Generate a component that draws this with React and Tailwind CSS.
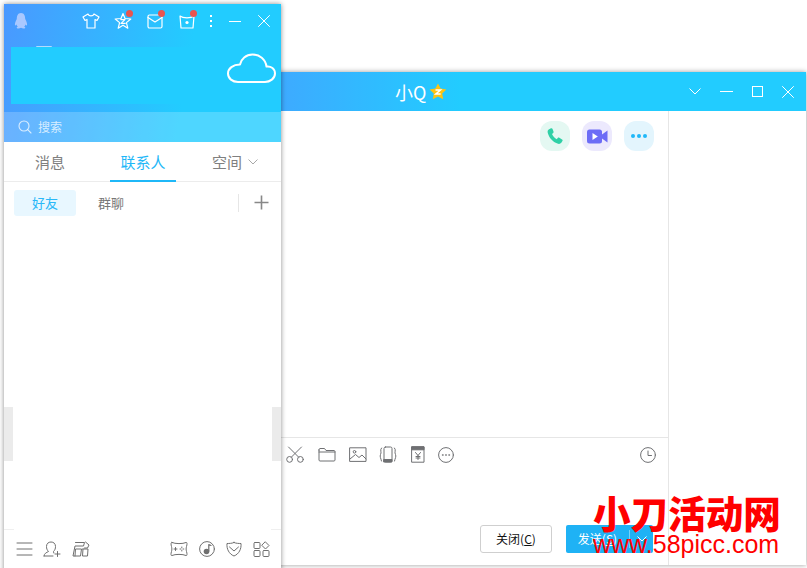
import React from 'react';

const line = { fill: 'none', stroke: 'currentColor', strokeWidth: 1.2, strokeLinecap: 'round', strokeLinejoin: 'round' };

const Icon = ({ w = 18, h = 18, children, className = '' }) => (
  <svg width={w} height={h} viewBox={`0 0 ${w} ${h}`} className={`shrink-0 ${className}`} {...line}>
    {children}
  </svg>
);

const Dot = () => <span className="absolute -top-[2px] -right-[1px] w-[7px] h-[7px] rounded-full bg-[#e8544f]" />;

const Close = ({ s = 12 }) => (
  <Icon w={s} h={s}>
    <path d={`M0.5 0.5L${s - 0.5} ${s - 0.5}M${s - 0.5} 0.5L0.5 ${s - 0.5}`} strokeWidth="1" />
  </Icon>
);

const ListWindow = () => (
  <div className="absolute left-[4px] top-[4px] z-10 w-[277px] h-[570px] flex flex-col bg-white shadow-[0_0_5px_rgba(0,0,0,0.45)]">
    {/* header */}
    <div className="bg-[linear-gradient(100deg,#4a98ff,#22ccff_65%)] text-white">
      <div className="flex h-[34px] mb-[9px] items-center pl-[10px]">
        <svg width="14" height="16" viewBox="0 0 14 16" className="shrink-0">
          <path d="M7 0C3.8 0 2.8 3 2.8 6C1.5 8.5 0.6 10.5 1 12.5C1.6 12.5 2 12 2.4 11.4C2.7 12.3 3.2 13 3.8 13.5C2.8 14 2.4 14.6 3 15.2C4 15.8 6 15.4 7 14.8C8 15.4 10 15.8 11 15.2C11.6 14.6 11.2 14 10.2 13.5C10.8 13 11.3 12.3 11.6 11.4C12 12 12.4 12.5 13 12.5C13.4 10.5 12.5 8.5 11.2 6C11.2 3 10.2 0 7 0Z" fill="#a9c8ff" />
        </svg>
        <div className="ml-[54px] flex items-center gap-[14px]">
          <Icon>
            <path d="M6 2L1 5L3 8.5L5 7.5V16H13V7.5L15 8.5L17 5L12 2C11 4.5 7 4.5 6 2Z" />
          </Icon>
          <span className="relative">
            <Icon>
              <path d="M9 1.5L11 6.5L16.8 7L12.4 10.6L13.8 16.2L9 13.2L4.2 16.2L5.6 10.6L1.2 7L7 6.5Z" />
              <path d="M6.8 7.6H11L7 11.4H11.2" />
            </Icon>
            <Dot />
          </span>
          <span className="relative">
            <Icon>
              <rect x="2" y="3" width="14" height="13" rx="1.5" />
              <path d="M2 5.5L9 10L16 5.5" />
            </Icon>
            <Dot />
          </span>
          <span className="relative">
            <Icon>
              <path d="M2 4C5 6.5 13 6.5 16 4L15 16H3Z" />
              <circle cx="9" cy="10.5" r="1.6" fill="currentColor" stroke="none" />
            </Icon>
            <Dot />
          </span>
        </div>
        <div className="ml-[14px] flex flex-col gap-[3px]">
          <span className="w-[2px] h-[2px] bg-white" />
          <span className="w-[2px] h-[2px] bg-white" />
          <span className="w-[2px] h-[2px] bg-white" />
        </div>
        <span className="ml-[17px] w-[12px] h-px bg-white" />
        <span className="ml-[17px]"><Close /></span>
      </div>
      {/* name strip */}
      <div className="relative ml-[7px] h-[57px] bg-[#22ccff] flex items-start justify-end pr-[5px] pt-[6px]">
        <span className="absolute left-[25px] -top-[1px] w-[16px] h-[1px] rounded-t-full bg-white/60" />
        <Icon w={49} h={31} className="[&>path]:[stroke-width:2]">
          <path d="M11 29H38C43 29 48 25.5 48 20.5C48 15.5 44 13 39.5 13.5C38.5 6 32.5 1.5 25.5 1.5C19 1.5 14 6 13 11.5C6 11.5 1 15.5 1 20.5C1 25.5 5.5 29 11 29Z" />
        </Icon>
      </div>
      <div className="h-[8px]" />
      {/* search */}
      <div className="h-[30px] bg-white/20 flex items-center gap-[6px] pl-[14px] text-[12px] text-white/75">
        <svg width="14" height="14" viewBox="0 0 14 14" fill="none" stroke="currentColor" strokeWidth="1.1" strokeLinecap="round">
          <circle cx="6" cy="6" r="5" />
          <path d="M9.7 9.7L13 13" />
        </svg>
        <span>搜索</span>
      </div>
    </div>

    {/* tabs */}
    <div className="relative h-[40px] flex items-center pt-[1px] border-b border-[#ececec] text-[15px] text-[#808080]">
      <span className="w-[92px] text-center">消息</span>
      <span className="relative w-[94px] h-full flex items-center justify-center text-[#1fb8f8]">
        联系人
        <span className="absolute left-[14px] -bottom-px w-[66px] h-[2px] bg-[#1fb8f8]" />
      </span>
      <span className="flex items-center ml-[22px]">
        空间
        <svg width="10" height="6" viewBox="0 0 10 6" fill="none" stroke="#a8a8a8" strokeWidth="1" className="ml-[6px]">
          <path d="M0.5 0.5L5 5L9.5 0.5" />
        </svg>
      </span>
    </div>

    {/* sub tabs */}
    <div className="flex items-center h-[26px] mt-[8px] ml-[10px] text-[13px]">
      <span className="w-[62px] h-[26px] rounded-[3px] bg-[#e8f7ff] text-[#2ab8f8] flex items-center justify-center">好友</span>
      <span className="w-[70px] text-center text-[#777]">群聊</span>
      <span className="ml-[92px] w-px h-[18px] bg-[#e6e6e6]" />
      <svg width="15" height="15" viewBox="0 0 15 15" stroke="#888" strokeWidth="1.6" className="ml-[15px] -mt-[1px]">
        <path d="M7.5 0.5V14.5M0.5 7.5H14.5" />
      </svg>
    </div>

    <div className="flex-1" />

    {/* bottom bar */}
    <div className="h-[39px] flex items-start pt-[3px] text-[#6f6f6f] relative">
      <span className="absolute left-0 top-[-6px] w-[10px] h-px bg-[#efefef]" />
      <span className="absolute right-0 top-[-6px] w-[10px] h-px bg-[#efefef]" />
      <div className="flex items-center gap-[10px] ml-[12px] mt-[3px]">
        <Icon w={17} h={14}>
          <path d="M1 1H16M1 7H16M1 13H16" strokeWidth="1" />
        </Icon>
        <Icon w={19} h={16} className="[&>path]:[stroke-width:1]">
          <path d="M1 15C1 12.5 3.5 11.5 5.5 10.5C4 9 3.5 7.5 3.5 5.5C3.5 2.5 5.5 1 8 1C10.5 1 12.5 2.5 12.5 5.5C12.5 7.5 12 9 10.5 10.5L10.8 12M1 15H10" />
          <path d="M14.5 10.5V15.5M12 13H17" />
        </Icon>
        <Icon w={18} h={16} className="[&>path]:[stroke-width:1]">
          <path d="M3.5 1.5H12.5L11.5 5H3L1 15H8.5L9.5 8H3.5L3 15M11 8H16L15.5 15H10.5L11 8ZM13.5 1L17 4L15.5 7H12.5" />
        </Icon>
      </div>
      <div className="flex items-center gap-[11px] ml-[80px] mt-[3px]">
        <Icon w={18} h={16} className="[&>path]:[stroke-width:1]">
          <path d="M2 1.5C5 3 13 3 16 1.5C17.5 1 17 4 16.5 5.5C16 7.5 16 8.5 16.5 10.5C17 12 17.5 15 16 14.5C13 13 5 13 2 14.5C0.5 15 1 12 1.5 10.5C2 8.5 2 7.5 1.5 5.5C1 4 0.5 1 2 1.5Z" />
          <path d="M4 8H7M5.5 6.5V9.5M10 8H10.8M13 8H13.8M11.8 6V6.8M11.8 9.2V10" />
        </Icon>
        <Icon w={16} h={16} className="[&>circle]:[stroke-width:1]">
          <circle cx="8" cy="8" r="7.4" />
          <circle cx="7.5" cy="10.5" r="2.8" fill="currentColor" stroke="none" />
          <path d="M9.8 10V3.5L12 4.5" />
        </Icon>
        <Icon w={16} h={16} className="[&>path]:[stroke-width:1]">
          <path d="M8 1.5C10 2.5 13 2.5 15 2.5C15.5 8 13 13 8 15C3 13 0.5 8 1 2.5C3 2.5 6 2.5 8 1.5Z" />
          <path d="M3.5 6L8 10L12.5 6" />
        </Icon>
        <Icon w={17} h={16} className="[&>*]:[stroke-width:1]">
          <rect x="1" y="1.5" width="6" height="6" rx="1" />
          <path d="M12.5 1L16 4.5L12.5 8L9 4.5Z" />
          <rect x="1" y="9.5" width="6" height="6" rx="1" />
          <rect x="10" y="9.5" width="6" height="6" rx="1" />
        </Icon>
      </div>
    </div>

    {/* resize handles */}
    <span className="absolute left-0 top-[403px] w-[9px] h-[54px] bg-[#ebebeb]" />
    <span className="absolute right-0 top-[403px] w-[9px] h-[54px] bg-[#ebebeb]" />
  </div>
);

const ActionButton = ({ bg, children }) => (
  <span className={`w-[30px] h-[30px] rounded-[12px] flex items-center justify-center ${bg}`}>{children}</span>
);

const ChatWindow = () => (
  <div className="absolute left-[200px] top-[72px] w-[606px] h-[493px] flex flex-col bg-white shadow-[0_0_5px_rgba(0,0,0,0.4)]">
    <div className="h-[39px] shrink-0 flex items-center bg-[linear-gradient(90deg,#4a9bff,#22ccff_43%)] text-white">
      <span className="ml-[195px] text-[18px] leading-none">小Q</span>
      <svg width="18" height="17" viewBox="0 0 18 17" className="ml-[3px]">
        <path d="M9 0.5L11.6 5.6L17.4 6.4L13.2 10.4L14.2 16.2L9 13.5L3.8 16.2L4.8 10.4L0.6 6.4L6.4 5.6Z" fill="#fdc313" />
        <path d="M6.5 7H11.5L6.8 11H11.6" fill="none" stroke="#fff" strokeWidth="1.5" />
      </svg>
      <div className="ml-auto flex items-center pr-[12px]">
        <svg width="12" height="7" viewBox="0 0 12 7" fill="none" stroke="currentColor" strokeWidth="1">
          <path d="M0.5 0.5L6 6L11.5 0.5" />
        </svg>
        <span className="ml-[19px] w-[13px] h-px bg-white" />
        <span className="ml-[19px] w-[11px] h-[11px] border border-white" />
        <span className="ml-[19px]"><Close /></span>
      </div>
    </div>

    <div className="flex-1 flex min-h-0">
      <div className="w-[469px] flex flex-col border-r border-[#e6e6e6]">
        <div className="h-[326px] flex justify-end gap-[12px] pt-[10px] pr-[14px]">
          <ActionButton bg="bg-[#e4f8f2]">
            <svg width="18" height="18" viewBox="0 0 24 24" fill="#2fd0a6">
              <path d="M6.6 1.8L3.6 3.3C2 4.3 1.8 6 2.6 8.6C4.3 14.3 9.2 19.8 15.2 22.1C17.4 22.9 19.3 22.5 20.4 21L21.9 18.7C22.4 17.9 22.2 17 21.4 16.5L17.8 14.4C17 14 16.2 14.1 15.6 14.8L14.4 16.2C11.6 14.9 9.1 12 8 9.3L9.6 8C10.2 7.4 10.3 6.6 10 5.9L8.6 2.4C8.2 1.6 7.4 1.4 6.6 1.8Z" />
            </svg>
          </ActionButton>
          <ActionButton bg="bg-[#ece9fd]">
            <svg width="21" height="15" viewBox="0 0 21 15">
              <rect x="0" y="0.5" width="15" height="14" rx="2.5" fill="#6c6cf6" />
              <path d="M15 5.5L20.5 1.5V13.5L15 9.5Z" fill="#6c6cf6" />
              <path d="M5.5 4V11L10.8 7.5Z" fill="#fff" />
            </svg>
          </ActionButton>
          <ActionButton bg="bg-[#e3f5fd]">
            <span className="flex gap-[2px]">
              <span className="w-[4px] h-[4px] rounded-full bg-[#1fb8f8]" />
              <span className="w-[4px] h-[4px] rounded-full bg-[#1fb8f8]" />
              <span className="w-[4px] h-[4px] rounded-full bg-[#1fb8f8]" />
            </span>
          </ActionButton>
        </div>

        {/* toolbar */}
        <div className="h-[128px] border-t border-[#e6e6e6] flex flex-col text-[#6f7073]">
          <div className="flex items-center h-[33px] pl-[86px]">
            <Icon w={18} h={17} className="[&>*]:[stroke-width:1]">
              <circle cx="3.6" cy="13.4" r="2.9" />
              <circle cx="14.4" cy="13.4" r="2.9" />
              <path d="M5.5 11L15.5 1M12.5 11L2.5 1" />
            </Icon>
            <Icon w={18} h={15} className="ml-[14px] [&>*]:[stroke-width:1]">
              <path d="M1 3V13C1 13.6 1.4 14 2 14H16C16.6 14 17 13.6 17 13V4.5C17 4 16.6 3.5 16 3.5H8L6.5 1.5H2C1.4 1.5 1 2 1 3ZM1 5H17" />
            </Icon>
            <Icon w={18} h={15} className="ml-[13px] [&>*]:[stroke-width:1]">
              <rect x="1" y="0.8" width="16" height="13.6" />
              <circle cx="5.5" cy="4.8" r="1.3" />
              <path d="M1 12L6.5 7.5L10 10.5L13 8L17 12" />
            </Icon>
            <Icon w={18} h={17} className="ml-[12px] [&>*]:[stroke-width:1]">
              <rect x="5" y="1" width="8" height="15" rx="1.5" />
              <rect x="5" y="13.5" width="8" height="2.5" fill="currentColor" />
              <path d="M2.5 2C0.5 4 3 6.5 1.5 8.5C0.5 10.5 2 12.5 2.5 15M15.5 2C17.5 4 15 6.5 16.5 8.5C17.5 10.5 16 12.5 15.5 15" />
            </Icon>
            <Icon w={14} h={17} className="ml-[14px] [&>*]:[stroke-width:1]">
              <rect x="1" y="0.8" width="12" height="15.4" />
              <rect x="1" y="0.8" width="12" height="3" fill="currentColor" />
              <path d="M4.5 6.5L7 9.5L9.5 6.5M7 9.5V13.5M5 10.5H9M5 12H9" />
            </Icon>
            <Icon w={16} h={16} className="ml-[13px] [&>circle]:[stroke-width:1]">
              <circle cx="8" cy="8" r="7.4" />
              <path d="M4.6 8H5M7.8 8H8.2M11 8H11.4" strokeWidth="1.6" />
            </Icon>
            <Icon w={16} h={16} className="ml-[186px] [&>*]:[stroke-width:1]">
              <circle cx="8" cy="8" r="7.4" />
              <path d="M8 4V8.5H11.5" />
            </Icon>
          </div>
          <div className="mt-auto mb-[12px] flex justify-end pr-[15px] text-[12px]">
            <button className="w-[72px] h-[28px] rounded-[3px] border border-[#cfcfcf] bg-white text-[#111]">
              关闭(<span className="underline">C</span>)
            </button>
            <div className="ml-[14px] w-[87px] h-[28px] rounded-[2px] bg-[#1fb2f5] text-white flex items-center">
              <span className="w-[63px] text-center">发送(<span className="underline">S</span>)</span>
              <span className="w-px h-[18px] bg-white/40" />
              <svg width="10" height="6" viewBox="0 0 10 6" fill="none" stroke="#fff" strokeWidth="1" className="ml-[7px]">
                <path d="M0.5 0.5L5 5L9.5 0.5" />
              </svg>
            </div>
          </div>
        </div>
      </div>
      <div className="flex-1" />
    </div>
  </div>
);

export default function App() {
  return (
    <div className="relative w-[807px] h-[568px] overflow-hidden bg-white font-['Noto_Sans_CJK_SC','Liberation_Sans',sans-serif]">
      <ChatWindow />
      <ListWindow />
      {/* watermark */}
      <div className="absolute z-20 left-[593px] top-[489px] w-[190px] text-[#ff0000]">
        <div className="text-[37.6px] leading-[46px] font-black whitespace-nowrap">小刀活动网</div>
        <div className="text-[25px] leading-[25px] font-['Liberation_Sans',sans-serif] whitespace-nowrap -mt-[3px]">www.58picc.com</div>
      </div>
    </div>
  );
}
